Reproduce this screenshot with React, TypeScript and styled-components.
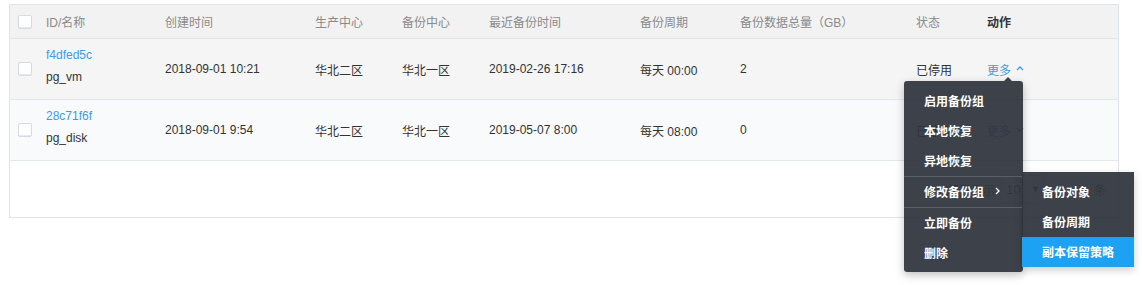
import React from "react";
import styled, { createGlobalStyle } from "styled-components";

const GlobalStyle = createGlobalStyle`
  html, body {
    margin: 0;
    padding: 0;
    background: #ffffff;
  }
  body {
    font-family: "Liberation Sans", "Noto Sans CJK SC", sans-serif;
    font-size: 12px;
    color: #333333;
  }
`;

const COLS = "36px 119px 150px 87px 87px 151px 100px 176px 71px 1fr";

const Page = styled.div`
  box-sizing: border-box;
  min-height: 285px;
  padding: 4px 0 0 9px;
`;

const Table = styled.div`
  width: 1108px;
  border: 1px solid #dfe3ea;
  background: #ffffff;
`;

const HeaderRow = styled.div`
  display: grid;
  grid-template-columns: ${COLS};
  align-items: center;
  height: 33px;
  background: #f2f2f2;
  border-bottom: 1px solid #e1e5ec;
`;

const HeadCell = styled.div<{ $strong?: boolean }>`
  color: ${(p) => (p.$strong ? "#333333" : "#8a8a8a")};
  font-weight: ${(p) => (p.$strong ? 700 : 400)};
  white-space: nowrap;
`;

const Row = styled.div<{ $bg: string }>`
  display: grid;
  grid-template-columns: ${COLS};
  align-items: center;
  height: 60px;
  background: ${(p) => p.$bg};
  border-bottom: 1px solid #e3e7ee;
`;

const Cell = styled.div`
  white-space: nowrap;
  color: #333333;
`;

const CheckCell = styled.div`
  padding-left: 8px;
  display: flex;
  align-items: center;
`;

const Checkbox = styled.span`
  display: block;
  width: 12px;
  height: 12px;
  background: #ffffff;
  border: 1px solid #d6dae2;
  border-radius: 2px;
  box-shadow: inset 0 -1px 0 #e6e9ee;
`;

const IdCell = styled.div`
  display: flex;
  flex-direction: column;
  gap: 8px;
  line-height: 14px;
  margin-bottom: 6px;
`;

const IdLink = styled.a`
  color: #3d9be3;
  text-decoration: none;
`;

const ActionCell = styled.div`
  position: relative;
  display: flex;
  align-items: center;
  height: 100%;
`;

const More = styled.span`
  display: inline-flex;
  align-items: center;
  gap: 5px;
  color: #3d9be3;
  cursor: pointer;
`;

const Footer = styled.div`
  height: 56px;
  display: flex;
  align-items: center;
  justify-content: flex-end;
  padding-right: 12px;
  color: #666666;
`;

const SizeSelect = styled.div`
  display: flex;
  align-items: center;
  justify-content: space-between;
  width: 34px;
  height: 27px;
  padding: 0 4px 0 5px;
  margin: 0 49px 0 5px;
  border: 1px solid #d9dde4;
  color: #666666;
  font-size: 13px;
`;

const Menu = styled.div`
  position: absolute;
  left: -83px;
  top: 42px;
  width: 119px;
  padding: 5px 0 4px;
  background: rgba(46, 51, 59, 0.93);
  border-radius: 3px;
  box-shadow: 0 3px 8px rgba(0, 0, 0, 0.25);
  z-index: 10;

  &::before {
    content: "";
    position: absolute;
    top: -4px;
    left: 100px;
    border-left: 4px solid transparent;
    border-right: 4px solid transparent;
    border-bottom: 4px solid rgba(46, 51, 59, 0.93);
  }
`;

const MenuItem = styled.div<{ $active?: boolean }>`
  position: relative;
  box-sizing: border-box;
  display: flex;
  align-items: center;
  height: 30px;
  padding: 0 20px 2px;
  color: #ffffff;
  font-size: 12px;
  font-weight: 700;
  white-space: nowrap;
  background: ${(p) => (p.$active ? "#1da1f2" : "transparent")};
`;

const Divider = styled.div`
  height: 1px;
  background: #5b6068;
`;

const SubMenu = styled.div`
  position: absolute;
  left: calc(100% - 1px);
  top: -5px;
  width: 112px;
  padding-top: 5px;
  background: rgba(46, 51, 59, 0.93);
  box-shadow: 0 3px 8px rgba(0, 0, 0, 0.2);
`;

const Chevron = ({ dir, color }: { dir: "up" | "down" | "right"; color: string }) => {
  const d =
    dir === "up" ? "M1 5 L4 2 L7 5" : dir === "down" ? "M1 2 L4 5 L7 2" : "M2 1 L5 4 L2 7";
  return (
    <svg width="8" height="8" viewBox="0 0 8 8" fill="none">
      <path d={d} stroke={color} strokeWidth="1.3" />
    </svg>
  );
};

const headers = [
  "ID/名称",
  "创建时间",
  "生产中心",
  "备份中心",
  "最近备份时间",
  "备份周期",
  "备份数据总量（GB）",
  "状态",
];

const rows = [
  {
    id: "f4dfed5c",
    name: "pg_vm",
    created: "2018-09-01 10:21",
    prod: "华北二区",
    backup: "华北一区",
    last: "2019-02-26 17:16",
    cycle: "每天 00:00",
    size: "2",
    status: "已停用",
    open: true,
    bg: "#f5f5f5",
  },
  {
    id: "28c71f6f",
    name: "pg_disk",
    created: "2018-09-01 9:54",
    prod: "华北二区",
    backup: "华北一区",
    last: "2019-05-07 8:00",
    cycle: "每天 08:00",
    size: "0",
    status: "已停用",
    open: false,
    bg: "#f9fafc",
  },
];

const ActionMenu = () => (
  <Menu>
    <MenuItem>启用备份组</MenuItem>
    <MenuItem>本地恢复</MenuItem>
    <MenuItem>异地恢复</MenuItem>
    <Divider />
    <MenuItem>
      修改备份组
      <span style={{ marginLeft: 10, display: "flex" }}>
        <Chevron dir="right" color="#ffffff" />
      </span>
      <SubMenu>
        <MenuItem>备份对象</MenuItem>
        <MenuItem>备份周期</MenuItem>
        <MenuItem $active>副本保留策略</MenuItem>
      </SubMenu>
    </MenuItem>
    <Divider />
    <MenuItem>立即备份</MenuItem>
    <MenuItem>删除</MenuItem>
  </Menu>
);

export default function App() {
  return (
    <>
      <GlobalStyle />
      <Page>
        <Table>
          <HeaderRow>
            <CheckCell>
              <Checkbox />
            </CheckCell>
            {headers.map((h) => (
              <HeadCell key={h}>{h}</HeadCell>
            ))}
            <HeadCell $strong>动作</HeadCell>
          </HeaderRow>
          {rows.map((r) => (
            <Row key={r.id} $bg={r.bg}>
              <CheckCell>
                <Checkbox />
              </CheckCell>
              <IdCell>
                <IdLink>{r.id}</IdLink>
                <span>{r.name}</span>
              </IdCell>
              <Cell>{r.created}</Cell>
              <Cell>{r.prod}</Cell>
              <Cell>{r.backup}</Cell>
              <Cell>{r.last}</Cell>
              <Cell>{r.cycle}</Cell>
              <Cell>{r.size}</Cell>
              <Cell>{r.status}</Cell>
              <ActionCell>
                <More>
                  更多
                  <Chevron dir={r.open ? "up" : "down"} color="#3d9be3" />
                </More>
                {r.open && <ActionMenu />}
              </ActionCell>
            </Row>
          ))}
          <Footer>
            每页显示
            <SizeSelect>
              10
              <span style={{ fontSize: 9 }}>▼</span>
            </SizeSelect>
            条
          </Footer>
        </Table>
      </Page>
    </>
  );
}
